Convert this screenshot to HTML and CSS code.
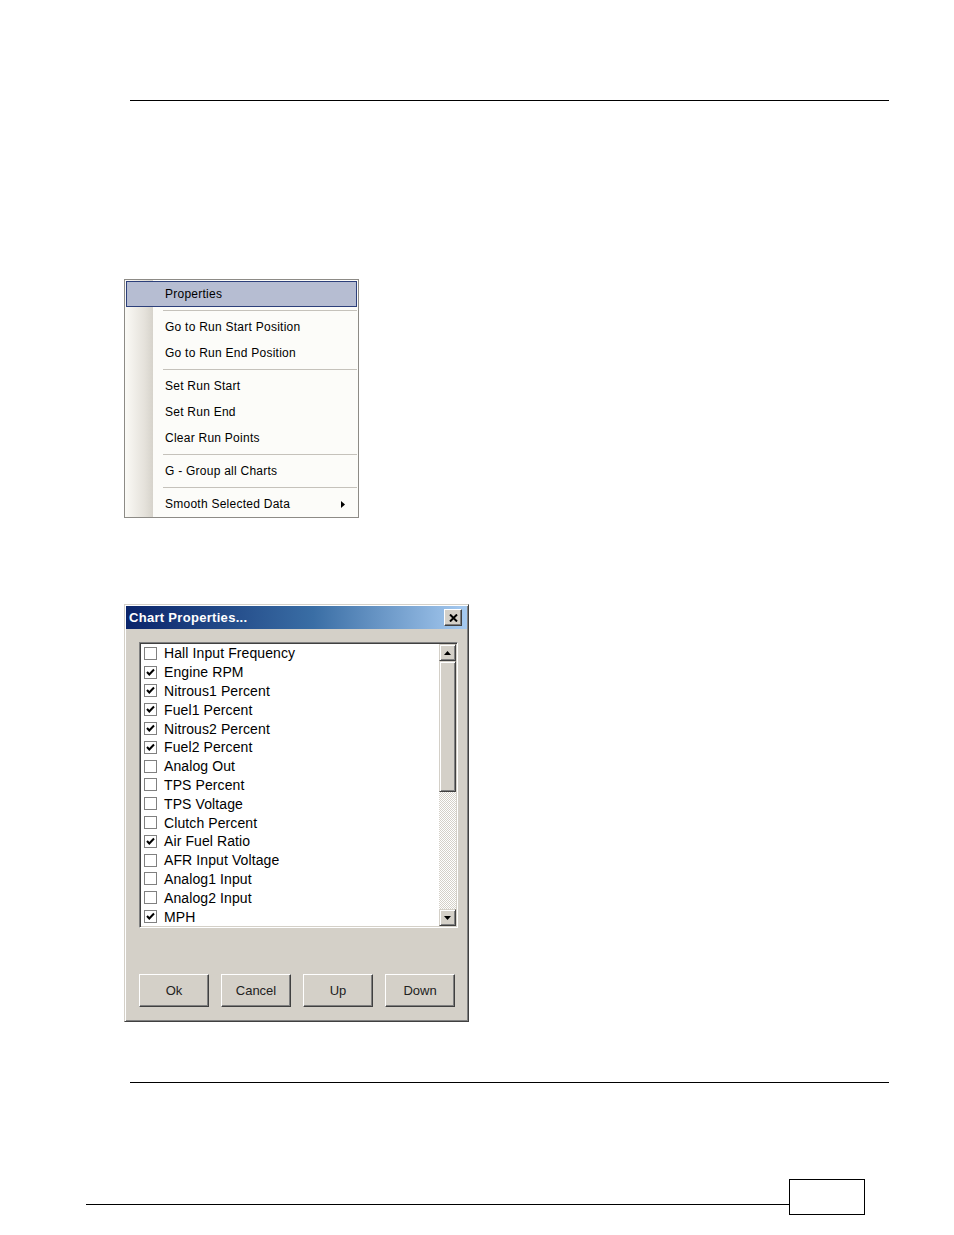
FILE: index.html
```html
<!DOCTYPE html>
<html>
<head>
<meta charset="utf-8">
<link rel="stylesheet" href="styles.css">
</head>
<body>
<div class="page">
  <div class="rule rule-top"></div>

  <div class="menu">
    <div class="mi mi-hl">Properties</div>
    <div class="sep"></div>
    <div class="mi">Go to Run Start Position</div>
    <div class="mi">Go to Run End Position</div>
    <div class="sep"></div>
    <div class="mi">Set Run Start</div>
    <div class="mi">Set Run End</div>
    <div class="mi">Clear Run Points</div>
    <div class="sep"></div>
    <div class="mi">G - Group all Charts</div>
    <div class="sep"></div>
    <div class="mi mi-sub">Smooth Selected Data<svg class="subarrow" width="4" height="7" viewBox="0 0 4 7"><polygon points="0,0 4,3.5 0,7" fill="#000"/></svg></div>
  </div>

  <div class="dialog">
    <div class="titlebar">
      <span class="title">Chart Properties...</span>
      <span class="closebtn"><svg width="9" height="8" viewBox="0 0 9 8"><path d="M1 0.5 L8 7.5 M8 0.5 L1 7.5" stroke="#000" stroke-width="2"/></svg></span>
    </div>
    <div class="listbox">
      <div class="rows">
        <div class="row"><span class="cb"></span>Hall Input Frequency</div>
        <div class="row"><span class="cb on"><svg width="11" height="11" viewBox="0 0 11 11"><path d="M2 5 L4.3 7.5 L9 2.5" fill="none" stroke="#000" stroke-width="2"/></svg></span>Engine RPM</div>
        <div class="row"><span class="cb on"><svg width="11" height="11" viewBox="0 0 11 11"><path d="M2 5 L4.3 7.5 L9 2.5" fill="none" stroke="#000" stroke-width="2"/></svg></span>Nitrous1 Percent</div>
        <div class="row"><span class="cb on"><svg width="11" height="11" viewBox="0 0 11 11"><path d="M2 5 L4.3 7.5 L9 2.5" fill="none" stroke="#000" stroke-width="2"/></svg></span>Fuel1 Percent</div>
        <div class="row"><span class="cb on"><svg width="11" height="11" viewBox="0 0 11 11"><path d="M2 5 L4.3 7.5 L9 2.5" fill="none" stroke="#000" stroke-width="2"/></svg></span>Nitrous2 Percent</div>
        <div class="row"><span class="cb on"><svg width="11" height="11" viewBox="0 0 11 11"><path d="M2 5 L4.3 7.5 L9 2.5" fill="none" stroke="#000" stroke-width="2"/></svg></span>Fuel2 Percent</div>
        <div class="row"><span class="cb"></span>Analog Out</div>
        <div class="row"><span class="cb"></span>TPS Percent</div>
        <div class="row"><span class="cb"></span>TPS Voltage</div>
        <div class="row"><span class="cb"></span>Clutch Percent</div>
        <div class="row"><span class="cb on"><svg width="11" height="11" viewBox="0 0 11 11"><path d="M2 5 L4.3 7.5 L9 2.5" fill="none" stroke="#000" stroke-width="2"/></svg></span>Air Fuel Ratio</div>
        <div class="row"><span class="cb"></span>AFR Input Voltage</div>
        <div class="row"><span class="cb"></span>Analog1 Input</div>
        <div class="row"><span class="cb"></span>Analog2 Input</div>
        <div class="row"><span class="cb on"><svg width="11" height="11" viewBox="0 0 11 11"><path d="M2 5 L4.3 7.5 L9 2.5" fill="none" stroke="#000" stroke-width="2"/></svg></span>MPH</div>
      </div>
      <div class="scrollbar">
        <div class="sbtn"><svg width="7" height="4" viewBox="0 0 7 4"><polygon points="3.5,0 7,4 0,4" fill="#000"/></svg></div>
        <div class="thumb"></div>
        <div class="track"></div>
        <div class="sbtn"><svg width="7" height="4" viewBox="0 0 7 4"><polygon points="0,0 7,0 3.5,4" fill="#000"/></svg></div>
      </div>
    </div>
    <div class="buttons">
      <div class="btn">Ok</div>
      <div class="btn">Cancel</div>
      <div class="btn">Up</div>
      <div class="btn">Down</div>
    </div>
  </div>

  <div class="rule rule-bottom"></div>

  <div class="footer">
    <div class="footline"></div>
    <div class="pagebox"></div>
  </div>
</div>
</body>
</html>
```

FILE: styles.css
```css
html, body {
  margin: 0;
  padding: 0;
  background: #fff;
}

.page {
  width: 954px;
  height: 1235px;
  overflow: hidden;
  font-family: "Liberation Sans", Arial, sans-serif;
  color: #000;
}

.rule {
  width: 759px;
  height: 1px;
  background: #000;
  margin-left: 130px;
}

.rule-top {
  margin-top: 100px;
}

.rule-bottom {
  margin-top: 60px;
}

/* Context menu */
.menu {
  margin: 178px 0 0 124px;
  width: 235px;
  box-sizing: border-box;
  border: 1px solid #8d8b86;
  background: linear-gradient(to right, #fbfaf6 0, #e4e1da 20px, #d6d3cb 28px, #fcfcf9 28px, #fcfcf9 100%);
  font-size: 12px;
  letter-spacing: 0.25px;
}

.mi {
  height: 26px;
  line-height: 26px;
  padding-left: 40px;
  box-sizing: border-box;
  display: flex;
  align-items: center;
}

.mi-hl {
  margin: 1px 1px 0 1px;
  padding-left: 38px;
  border: 1px solid #2c3f7a;
  background: #b6bdd2;
}

.mi-sub {
  justify-content: space-between;
  padding-right: 13px;
}

.subarrow {
  display: block;
}

.sep {
  height: 7px;
  margin-left: 38px;
  margin-right: 1px;
  box-sizing: border-box;
  padding-top: 3px;
}

.sep::before {
  content: "";
  display: block;
  height: 1px;
  background: #c5c2bb;
}

/* Dialog */
.dialog {
  margin: 86px 0 0 124px;
  width: 345px;
  height: 418px;
  box-sizing: border-box;
  background: #d4d0c8;
  border: 1px solid;
  border-color: #d4d0c8 #404040 #404040 #d4d0c8;
  box-shadow: inset 1px 1px #ffffff, inset -1px -1px #808080;
  padding: 1px;
}

.titlebar {
  height: 23px;
  background: linear-gradient(to right, #0a246a 0%, #3a6ea5 55%, #a6caf0 100%);
  display: flex;
  align-items: center;
  padding-left: 3px;
  padding-right: 5px;
}

.title {
  color: #fff;
  font-weight: bold;
  font-size: 13px;
  letter-spacing: 0.3px;
}

.closebtn {
  margin-left: auto;
  width: 18px;
  height: 17px;
  box-sizing: border-box;
  background: #d4d0c8;
  border: 1px solid;
  border-color: #fff #404040 #404040 #fff;
  box-shadow: inset -1px -1px #808080;
  display: flex;
  align-items: center;
  justify-content: center;
}

.closebtn svg {
  display: block;
}

.listbox {
  margin: 13px 0 0 13px;
  width: 319px;
  height: 286px;
  box-sizing: border-box;
  background: #fff;
  border: 1px solid;
  border-color: #808080 #ffffff #ffffff #808080;
  box-shadow: inset 1px 1px #404040, inset -1px -1px #d4d0c8;
  padding: 1px;
  display: flex;
}

.rows {
  flex: 1;
  overflow: hidden;
  font-size: 14px;
  letter-spacing: 0.1px;
}

.row {
  height: 18.8px;
  display: flex;
  align-items: center;
  padding-left: 3px;
  white-space: nowrap;
}

.cb {
  width: 13px;
  height: 13px;
  box-sizing: border-box;
  border: 1px solid #808080;
  background: #fff;
  margin-right: 7px;
  flex: none;
  display: flex;
  align-items: center;
  justify-content: center;
}

.cb svg {
  display: block;
}

.scrollbar {
  width: 17px;
  display: flex;
  flex-direction: column;
}

.sbtn, .thumb {
  background: #d4d0c8;
  box-sizing: border-box;
  border: 1px solid;
  border-color: #d4d0c8 #404040 #404040 #d4d0c8;
  box-shadow: inset 1px 1px #fff, inset -1px -1px #808080;
}

.sbtn {
  height: 17px;
  flex: none;
  display: flex;
  align-items: center;
  justify-content: center;
}

.sbtn svg {
  display: block;
}

.thumb {
  height: 131px;
  flex: none;
}

.track {
  flex: 1;
  background: repeating-conic-gradient(#d4d0c8 0 25%, #ffffff 0 50%) 0 0 / 2px 2px;
}

.buttons {
  display: flex;
  gap: 12px;
  margin: 46px 0 0 13px;
}

.btn {
  width: 70px;
  height: 33px;
  box-sizing: border-box;
  border: 1px solid;
  border-color: #fff #404040 #404040 #fff;
  box-shadow: inset -1px -1px #808080;
  display: flex;
  align-items: center;
  justify-content: center;
  font-size: 13px;
  color: #222;
}

/* Footer */
.footer {
  margin: 96px 0 0 86px;
  display: flex;
  align-items: flex-end;
}

.footline {
  width: 703px;
  height: 1px;
  background: #000;
  margin-bottom: 10px;
}

.pagebox {
  width: 76px;
  height: 36px;
  box-sizing: border-box;
  border: 1px solid #000;
}
```
